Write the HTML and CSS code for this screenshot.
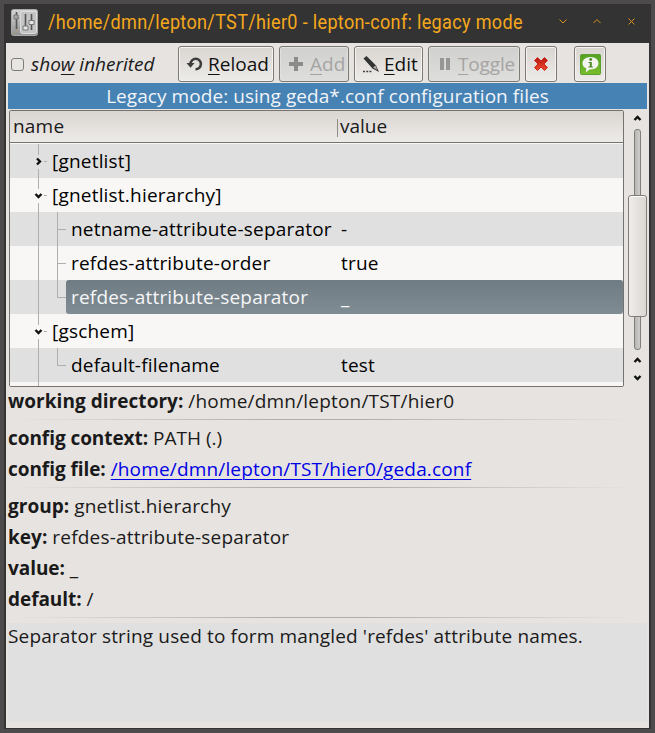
FILE: index.html
```html
<!DOCTYPE html>
<html lang="en">
<head>
<meta charset="utf-8">
<title>lepton-conf</title>
<link rel="stylesheet" href="styles.css">
</head>
<body>
<div class="window">
  <header class="titlebar">
    <svg class="appicon" width="27" height="27" viewBox="0 0 27 27">
      <defs><linearGradient id="ag" x1="0" y1="0" x2="0" y2="1"><stop offset="0" stop-color="#d4d4d4"/><stop offset="1" stop-color="#929292"/></linearGradient></defs>
      <rect x=".5" y=".5" width="26" height="26" rx="2" fill="url(#ag)" stroke="#aaa"/>
      <rect x="9.5" y="2.5" width="16" height="22" rx="2" fill="#c4c4c4" stroke="#dedede"/>
      <path d="M5.500 3v17M14.500 5v14M20.500 5v16" stroke="#555" stroke-width="1.6"/>
      <path d="M3 9h5M12 17h5v4h-5zM18 11.500h5v4h-5z" fill="#e6e6e6" stroke="#777"/>
      <path d="M3 6h4v4H3z" fill="#aaa" stroke="#777"/>
      <path d="M3 24l4-3" stroke="#b09a72"/>
    </svg>
    <h1 class="title">/home/dmn/lepton/TST/hier0 - lepton-conf: legacy mode</h1>
    <svg class="winbtns" width="76" height="9" viewBox="0 0 76 9" fill="none" stroke="#d8901f">
      <path d="M.5 2.500 4 6 7.500 2.500M34.500 6 38 2.500 41.500 6M69.500 1.500l6 6M75.500 1.500l-6 6"/>
    </svg>
  </header>
  <main class="content">
    <div class="toolbar">
      <label class="check"><span class="box"></span><i>sho<u>w</u> inherited</i></label>
      <button class="btn reload">
        <svg width="18" height="18" viewBox="0 0 18 18"><path d="M4.500 9A5.200 5.200 0 1 1 9.500 14.200" fill="none" stroke="#3d3d3d" stroke-width="2.500"/><path d="M.5 8h8L4.500 12.800z" fill="#3d3d3d"/></svg>
        <span><u>R</u>eload</span></button>
      <button class="btn add off">
        <svg width="18" height="18" viewBox="0 0 18 18"><path d="M7 2h4v5h5v4h-5v5H7v-5H2V7h5z" fill="#8b8b8a"/></svg>
        <span><u>A</u>dd</span></button>
      <button class="btn edit">
        <svg width="18" height="18" viewBox="0 0 18 18"><path d="M1.500 3.500 4.500 1 14 10.500 17 17l-6.500-3.500z" fill="#333"/><path d="m11 12.500 2.500-2 1.800 4.500z" fill="#aaa"/><path d="M1 16.500h9" stroke="#444" stroke-width="1.500" stroke-dasharray="2 1.200"/></svg>
        <span><u>E</u>dit</span></button>
      <button class="btn toggle off">
        <svg width="18" height="18" viewBox="0 0 18 18"><path d="M4 3h4v12H4zM10 3h4v12h-4z" fill="#969695"/></svg>
        <span><u>T</u>oggle</span></button>
      <button class="btn small">
        <svg width="16" height="16" viewBox="0 0 16 16"><defs><linearGradient id="rg" x1="0" y1="0" x2="0" y2="1"><stop offset="0" stop-color="#b91713"/><stop offset="1" stop-color="#ef4a2e"/></linearGradient></defs><path d="M4.500 1.500 8 5l3.500-3.500 3 3L11 8l3.500 3.500-3 3L8 11l-3.500 3.500-3-3L5 8 1.500 4.500z" fill="url(#rg)" stroke="#c8281c" stroke-linejoin="round"/></svg></button>
      <button class="btn small info">
        <svg width="21" height="21" viewBox="0 0 21 21"><defs><linearGradient id="gg" x1="0" y1="0" x2="0" y2="1"><stop offset="0" stop-color="#52a024"/><stop offset="1" stop-color="#78bd2c"/></linearGradient></defs><rect x=".5" y=".5" width="20" height="20" rx="1" fill="url(#gg)" stroke="#5ba02c"/><path d="M10.500 3c4.600 0 8 2.800 8 6.300s-3.400 6.200-8 6.200l-1-.1-3.700 3 .5-3.800c-2.300-1-3.800-3-3.800-5.300C2.500 5.800 5.900 3 10.500 3z" fill="#f4f4f0"/><circle cx="10.700" cy="5.500" r="1.400" fill="#4e8c28"/><path d="M8.500 8h3.300v4.500H13v1H8.500v-1h1.300V9H8.500z" fill="#4e8c28"/></svg></button>
    </div>
    <div class="banner"><span>Legacy mode: using geda*.conf configuration files</span></div>
    <div class="browser">
      <div class="tree">
        <div class="head"><span>name</span><span>value</span></div>
        <div class="rows">
          <div class="row group shut"><svg class="exp" width="9" height="9" viewBox="0 0 9 9"><path d="M3 1.500 6 4.500 3 7.500"/></svg><span class="n">[gnetlist]</span></div>
          <div class="row group"><svg class="exp" width="9" height="9" viewBox="0 0 9 9"><path d="M1.500 3 4.500 6 7.500 3"/></svg><span class="n">[gnetlist.hierarchy]</span></div>
          <div class="row leaf"><span class="n">netname-attribute-separator</span><span class="v">-</span></div>
          <div class="row leaf"><span class="n">refdes-attribute-order</span><span class="v">true</span></div>
          <div class="row leaf last sel"><span class="n">refdes-attribute-separator</span><span class="v">_</span></div>
          <div class="row group"><svg class="exp" width="9" height="9" viewBox="0 0 9 9"><path d="M1.500 3 4.500 6 7.500 3"/></svg><span class="n">[gschem]</span></div>
          <div class="row leaf last"><span class="n">default-filename</span><span class="v">test</span></div>
          <div class="row stub"></div>
        </div>
      </div>
      <div class="scroll">
        <svg width="9" height="9" viewBox="0 0 9 9"><path d="M1.500 6 4.500 3 7.500 6"/></svg>
        <div class="trough"><div class="thumb"></div></div>
        <svg width="9" height="9" viewBox="0 0 9 9"><path d="M1.500 6 4.500 3 7.500 6"/></svg>
        <svg class="down" width="9" height="9" viewBox="0 0 9 9"><path d="M1.500 3 4.500 6 7.500 3"/></svg>
      </div>
    </div>
    <p class="line"><b>working directory:</b> <span>/home/dmn/lepton/TST/hier0</span></p>
    <hr>
    <p class="line"><b class="tight">config context:</b> <span class="plain">PATH (.)</span></p>
    <p class="line"><b class="tight">config file:</b> <a>/home/dmn/lepton/TST/hier0/geda.conf</a></p>
    <hr>
    <p class="line"><b>group:</b> <span>gnetlist.hierarchy</span></p>
    <p class="line"><b>key:</b> <span>refdes-attribute-separator</span></p>
    <p class="line"><b class="tight">value:</b> <span>_</span></p>
    <p class="line"><b class="tight">default:</b> <span>/</span></p>
    <hr>
    <div class="desc"><span>Separator string used to form mangled 'refdes' attribute names.</span></div>
  </main>
</div>
</body>
</html>
```
FILE: styles.css
```css
* { box-sizing: border-box; }
body {
  margin: 0;
  width: 655px;
  height: 733px;
  padding: 4px;
  background: #4d4b4c;
  font: 19px/27px "Open Sans", "Noto Sans", sans-serif;
  color: #1a1a1a;
  overflow: hidden;
}
.window { width: 647px; height: 725px; background: #333; padding: 0 2px 1px; }
.titlebar { height: 39px; display: flex; align-items: center; padding: 0 14px 0 5px; }
.appicon { margin-top: -3px; }
.title {
  margin: -3px 0 0 10px;
  width: 480px;
  font: 400 21px/30px Roboto, sans-serif;
  letter-spacing: .38px;
  color: #f5a81c;
  white-space: nowrap;
  transform: scaleX(.86);
  transform-origin: 0 50%;
}
.winbtns { margin: -5px 0 0 auto; flex: none; }
.content { height: 685px; background: #e6e3e0; padding: 3px 2px 6px; }
.toolbar { display: flex; height: 37px; padding-left: 3px; }
.check { width: 167px; display: flex; align-items: center; }
.check i { margin-left: 7px; white-space: nowrap; }
.box { width: 13px; height: 13px; border: 1px solid #7e7c78; border-radius: 3px; background: #e8e6e3; }
u { text-underline-offset: 3px; text-decoration-thickness: 1px; }
.btn {
  height: 36px;
  margin-right: 5px;
  padding: 0 0 0 7px;
  display: flex;
  align-items: center;
  gap: 4px;
  flex: none;
  font: inherit;
  color: #111;
  white-space: nowrap;
  border: 1px solid #7a7972;
  border-radius: 3px;
  background: linear-gradient(#d9d5d1, #edebe8);
  box-shadow: inset 0 0 0 1px #f5f4f2;
}
.off { color: #a5a4a3; background: linear-gradient(#d0d0cf, #dededc); box-shadow: inset 0 0 0 1px #e0e0de; }
.reload { width: 96px; }
.add { width: 70px; gap: 5px; }
.edit { width: 69px; }
.toggle { width: 92px; letter-spacing: -.15px; }
.small { width: 32px; padding: 0; justify-content: center; }
.info { margin-left: 12px; }
.banner { height: 26px; background: #4682b4; color: #f1f4f8; text-align: center; line-height: 27px; letter-spacing: .06px; }
.browser { display: flex; height: 279px; padding: 1px 0 0 1px; }
.tree { width: 615px; height: 277px; border: 1px solid #757370; border-radius: 2px; overflow: hidden; background: #f8f7f6; }
.head { height: 32px; display: flex; line-height: 31px; letter-spacing: .2px; background: linear-gradient(#d9d5d1, #edebe8); border-bottom: 1px solid #757370; margin-bottom: 1px; }
.head span:first-child { width: 327px; padding-left: 3px; }
.head span:last-child { margin: 8px 0 5px; line-height: 15px; padding-left: 2px; border-left: 1px solid #908d89; letter-spacing: 0; }
.rows { height: 242px; overflow: hidden; color: #000; }
.row { height: 34px; line-height: 34px; display: flex; align-items: center; white-space: nowrap; letter-spacing: .2px; background: linear-gradient(#b0afae, #b0afae) 28px 0 / 1px 100% no-repeat #f8f7f6; }
.row:nth-child(odd) { background-color: #e0e0e0; }
.group { padding-left: 24px; background-image: linear-gradient(#b0afae 11px, transparent 11px, transparent 25px, #b0afae 25px), linear-gradient(#b0afae, #b0afae); background-position: 28px 0, 34px 17px; background-size: 1px 100%, 3px 1px; }
.exp { margin-right: 9px; }
svg.exp, .scroll svg { fill: none; stroke: #111; stroke-width: 2.4; flex: none; }
.leaf { background-image: linear-gradient(#b0afae, #b0afae), linear-gradient(#b0afae, #b0afae), linear-gradient(#b0afae, #b0afae); background-position: 28px 0, 47px 0, 48px 17px; background-size: 1px 100%, 1px 100%, 8px 1px; padding-left: 56px; }
.last { background-size: 1px 100%, 1px 18px, 8px 1px; }
.leaf .n { width: 270px; padding-left: 5px; }
.leaf .v { flex: 1; padding-left: 5px; }
.sel .n { border-radius: 3px 0 0 3px; }
.sel .n, .sel .v { height: 34px; color: #f5f6f7; background: linear-gradient(#707c84, #808c94); }
.sel .v { border-radius: 0 3px 3px 0; }
.scroll { width: 19px; margin-left: 4px; display: flex; flex-direction: column; align-items: center; padding-top: 4px; }
.trough { flex: none; width: 7px; height: 221px; margin: 6px 0; display: flex; flex-direction: column; align-items: center; border: 1px solid #7f7e79; border-radius: 3px; background: linear-gradient(90deg, #b8b7b5, #cfcdcb); }
.thumb { flex: none; width: 19px; height: 122px; margin-top: 65px; border: 1px solid #7f7e79; border-radius: 3px; background: linear-gradient(90deg, #efedea, #dbd7d3); box-shadow: inset 0 1px #fff; }
.down { margin-top: 8px; }
.line { margin: 0 0 4px; height: 27px; white-space: nowrap; }
.line b { letter-spacing: .04px; }
.line b.tight { letter-spacing: -.06px; }
.line span { letter-spacing: .19px; }
.line span.plain { letter-spacing: 0; }
a { color: #0000e6; letter-spacing: .16px; text-decoration: underline 1px; text-underline-offset: 3px; }
hr { height: 2px; margin: 0 0 4px; border: 0; background: linear-gradient(90deg, transparent 1%, #b0aeab 42%, #b0aeab 55%, transparent 98%) 0 0 / 100% 1px no-repeat; }
.desc { height: 99px; background: #e0e0e0; white-space: nowrap; letter-spacing: .15px; }
```
